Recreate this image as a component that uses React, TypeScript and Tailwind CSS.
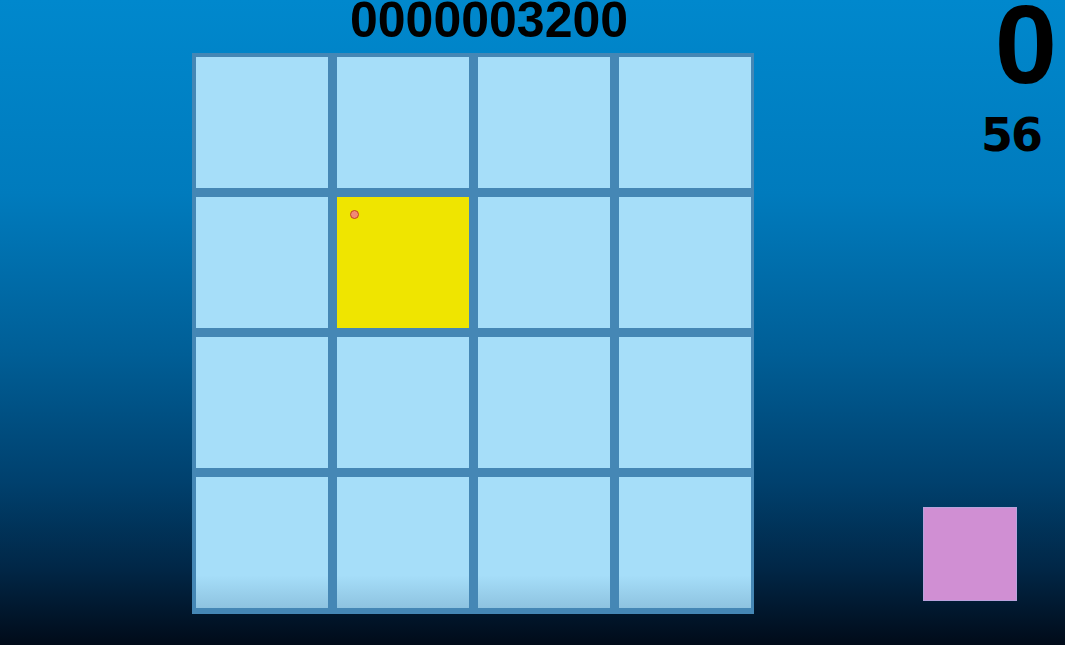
import React from "react";

const cells = Array.from({ length: 16 }, (_, i) => i);

export default function App() {
  return (
    <div className="w-[1065px] h-[645px] overflow-hidden flex bg-[linear-gradient(to_bottom,#0088cd_0%,#007bbd_30%,#005e96_55%,#00406d_75%,#012747_88%,#010b19_100%)]">
      <div className="pl-[192px] flex flex-col">
        <div
          className="h-[53px] pl-[158px] text-[50px] leading-[41px] font-bold text-black whitespace-nowrap"
          style={{ fontFamily: '"Liberation Sans", Arial, sans-serif' }}
        >
          0000003200
        </div>
        <div className="w-[562px] bg-[#4587b5] pl-[4px] pr-[3px] pt-[4px] pb-[6px] grid grid-cols-[repeat(4,132px)] gap-x-[9px] gap-y-[9px]">
          {cells.map((i) => {
            const yellow = i === 5;
            const bottom = i >= 12;
            return (
              <div
                key={i}
                className={
                  yellow
                    ? "relative h-[131px] bg-[#efe500]"
                    : bottom
                    ? "h-[131px] bg-[linear-gradient(to_bottom,#a6def9_0%,#a6def9_75%,#8ec3e0_100%)]"
                    : "h-[131px] bg-[#a6def9]"
                }
              >
                {yellow && (
                  <div className="absolute left-[13px] top-[13px] w-[9px] h-[9px] rounded-full bg-[#f28a76] border border-[#c0451f]" />
                )}
              </div>
            );
          })}
        </div>
      </div>
      <div className="flex-1 flex flex-col items-end">
        <div
          className="pr-[8px] text-[112px] leading-[89px] font-bold text-black"
          style={{ fontFamily: '"Liberation Sans", Arial, sans-serif' }}
        >
          0
        </div>
        <div
          className="mt-[23px] pr-[24px] text-[46px] leading-[46px] font-bold tracking-[-2px] text-black"
          style={{ fontFamily: '"DejaVu Sans", Verdana, sans-serif' }}
        >
          56
        </div>
        <div className="mt-auto mb-[44px] mr-[48px] w-[94px] h-[94px] bg-[#d08fd3] border border-[#b9a2dc]" />
      </div>
    </div>
  );
}
